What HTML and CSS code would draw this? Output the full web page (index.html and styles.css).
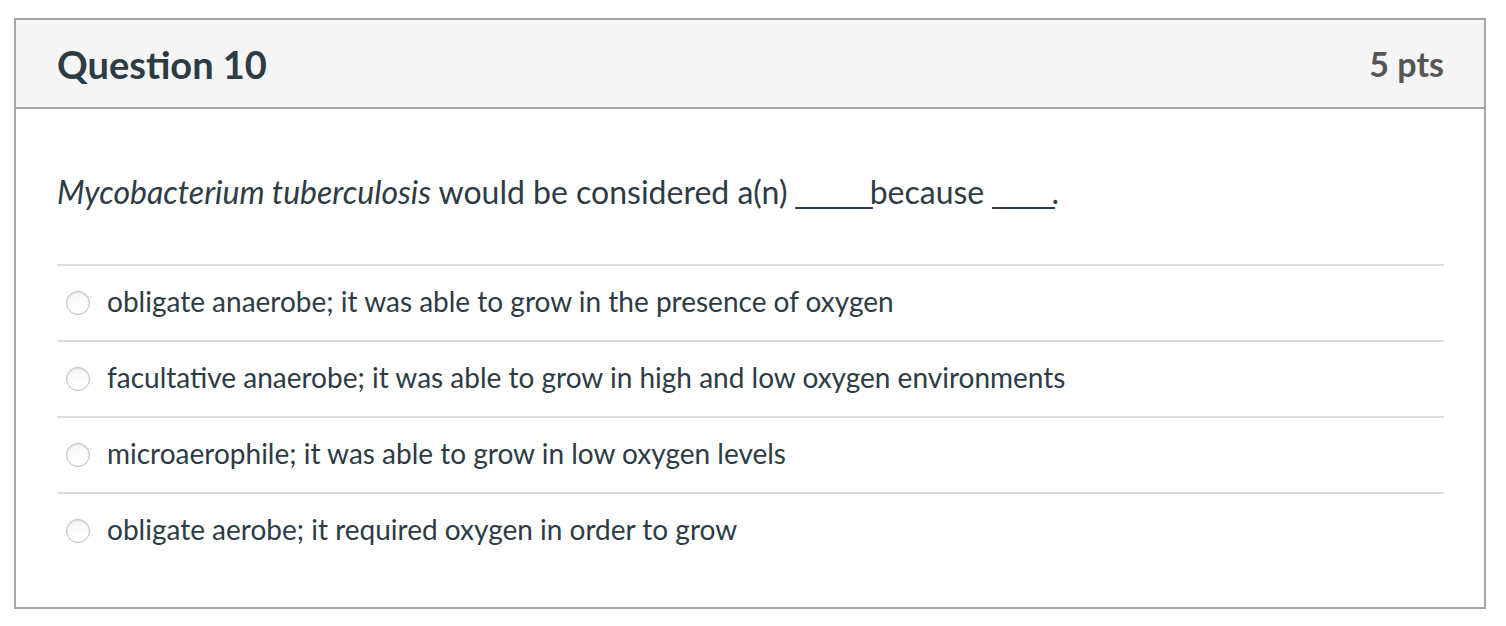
FILE: index.html
```html
<!DOCTYPE html>
<html>
<head>
<meta charset="utf-8">
<link rel="stylesheet" href="styles.css">
</head>
<body>
<div class="question">
  <div class="header">
    <h2 class="title">Question 10</h2>
    <div class="pts">5 pts</div>
  </div>
  <div class="content">
    <p class="text"><em>Mycobacterium tuberculosis</em> would be considered a(n) <span class="blank">_____</span>because <span class="blank">____</span>.</p>
    <div class="answers">
      <label class="answer"><span class="radio"></span><span class="label">obligate anaerobe; it was able to grow in the presence of oxygen</span></label>
      <label class="answer"><span class="radio"></span><span class="label">facultative anaerobe; it was able to grow in high and low oxygen environments</span></label>
      <label class="answer"><span class="radio"></span><span class="label">microaerophile; it was able to grow in low oxygen levels</span></label>
      <label class="answer"><span class="radio"></span><span class="label">obligate aerobe; it required oxygen in order to grow</span></label>
    </div>
  </div>
</div>
</body>
</html>
```

FILE: styles.css
```css
html, body {
  margin: 0;
  padding: 0;
  background: #fff;
}
body {
  padding: 18px 20px 0 14px;
  font-family: Lato, "Liberation Sans", sans-serif;
  color: #2d3b45;
}
.question {
  width: 1472px;
  box-sizing: border-box;
  border: 2px solid #a5a5a5;
  height: 591px;
}
.header {
  background: #f5f5f5;
  border-bottom: 2px solid #a5a5a5;
  height: 87px;
  display: flex;
  align-items: center;
  justify-content: space-between;
  padding: 0 40px 0 41px;
}
.title {
  margin: 0;
  font-size: 38px;
  font-weight: 700;
  color: #2d3b45;
}
.pts {
  font-size: 34px;
  font-weight: 700;
  color: #555;
}
.content {
  padding: 0 40px 0 41px;
}
.text {
  margin: 0;
  height: 155px;
  display: flex;
  align-items: center;
  white-space: pre;
  font-size: 32px;
  line-height: 1.2;
  padding-top: 12px;
  box-sizing: border-box;
}
.text em {
  font-style: italic;
}
.blank {
  font-family: "Liberation Sans", sans-serif;
  letter-spacing: -3px;
}
.answer {
  display: flex;
  align-items: center;
  height: 74px;
  border-top: 2px solid #dedede;
  padding-left: 9px;
}
.radio {
  width: 24px;
  height: 24px;
  border-radius: 50%;
  box-sizing: border-box;
  border: 1px solid #bdbdbd;
  background: linear-gradient(#f7f7f7, #fff);
  box-shadow: inset 0 1px 2px rgba(0,0,0,0.1);
  margin-right: 17px;
  flex: none;
}
.label {
  font-size: 28px;
  position: relative;
  top: -2px;
}
```
